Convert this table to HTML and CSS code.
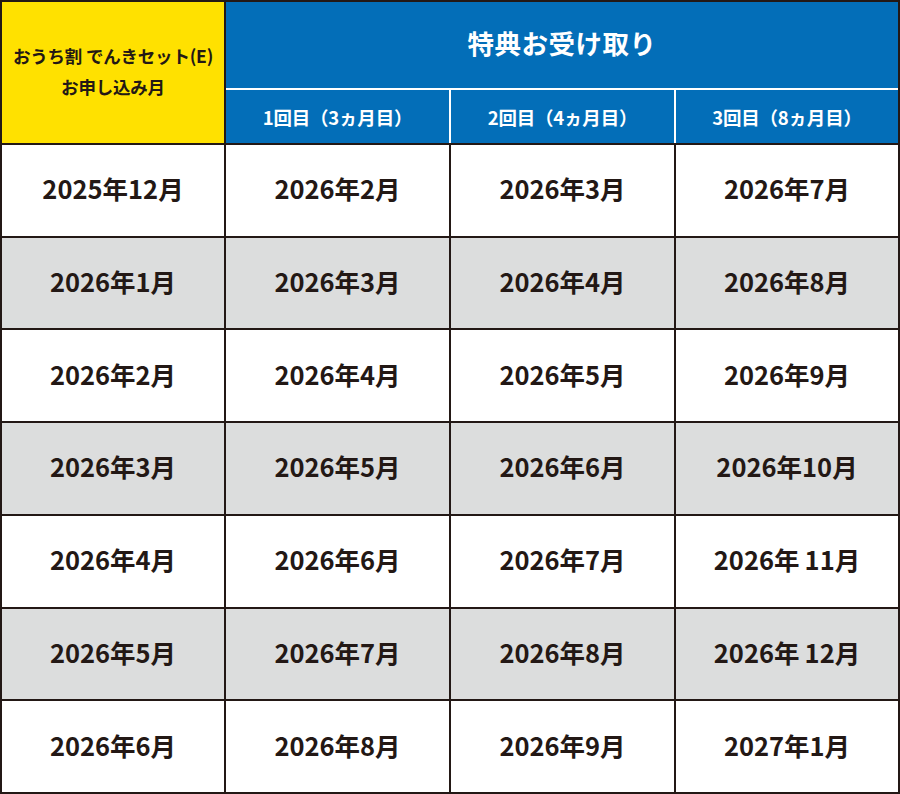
FILE: index.html
```html
<!DOCTYPE html>
<html lang="ja">
<head>
<meta charset="utf-8">
<link rel="stylesheet" href="styles.css">
</head>
<body>
<div class="table">
  <div class="cell apply">おうち割 でんきセット(E)<br>お申し込み月</div>
  <div class="benefit">
    <div class="benefit-title">特典お受け取り</div>
    <div class="sub">1回目（3ヵ月目）</div>
    <div class="sub">2回目（4ヵ月目）</div>
    <div class="sub">3回目（8ヵ月目）</div>
  </div>

  <div class="cell">2025年12月</div><div class="cell">2026年2月</div><div class="cell">2026年3月</div><div class="cell">2026年7月</div>
  <div class="cell gray">2026年1月</div><div class="cell gray">2026年3月</div><div class="cell gray">2026年4月</div><div class="cell gray">2026年8月</div>
  <div class="cell">2026年2月</div><div class="cell">2026年4月</div><div class="cell">2026年5月</div><div class="cell">2026年9月</div>
  <div class="cell gray">2026年3月</div><div class="cell gray">2026年5月</div><div class="cell gray">2026年6月</div><div class="cell gray">2026年10月</div>
  <div class="cell">2026年4月</div><div class="cell">2026年6月</div><div class="cell">2026年7月</div><div class="cell">2026年&#8201;11月</div>
  <div class="cell gray">2026年5月</div><div class="cell gray">2026年7月</div><div class="cell gray">2026年8月</div><div class="cell gray">2026年&#8201;12月</div>
  <div class="cell">2026年6月</div><div class="cell">2026年8月</div><div class="cell">2026年9月</div><div class="cell">2027年1月</div>
</div>
</body>
</html>
```

FILE: styles.css
```css
html, body {
  margin: 0;
  padding: 0;
  background: #ffffff;
}

.table {
  box-sizing: border-box;
  width: 900px;
  height: 794px;
  border: 2px solid #231815;
  background: #231815;
  display: grid;
  grid-template-columns: 222px 223px 223px 222px;
  grid-template-rows: 86px 53px repeat(7, 1fr);
  gap: 2px;
  font-family: "Noto Sans CJK JP", "Noto Sans", sans-serif;
  font-weight: 700;
  color: #231815;
}

.cell {
  background: #ffffff;
  display: flex;
  align-items: center;
  justify-content: center;
  font-size: 25.5px;
  letter-spacing: 0;
  padding-bottom: 5px;
}

.cell.gray {
  background: #dcdddd;
}

.cell.apply {
  grid-row: 1 / 3;
  background: #ffe100;
  font-size: 17.5px;
  line-height: 31px;
  text-align: center;
  letter-spacing: -0.2px;
  padding: 0 0 4px;
}

.benefit {
  grid-column: 2 / 5;
  grid-row: 1 / 3;
  display: grid;
  grid-template-columns: 223px 223px 222px;
  grid-template-rows: 86px 53px;
  gap: 2px;
  background: #ffffff;
}

.benefit-title {
  grid-column: 1 / 4;
  background: #036eb8;
  color: #ffffff;
  display: flex;
  align-items: center;
  justify-content: center;
  font-size: 26.5px;
  letter-spacing: 0.5px;
  padding-bottom: 6px;
}

.sub {
  background: #036eb8;
  color: #ffffff;
  display: flex;
  align-items: center;
  justify-content: center;
  font-size: 18.5px;
  letter-spacing: -0.2px;
}
```
